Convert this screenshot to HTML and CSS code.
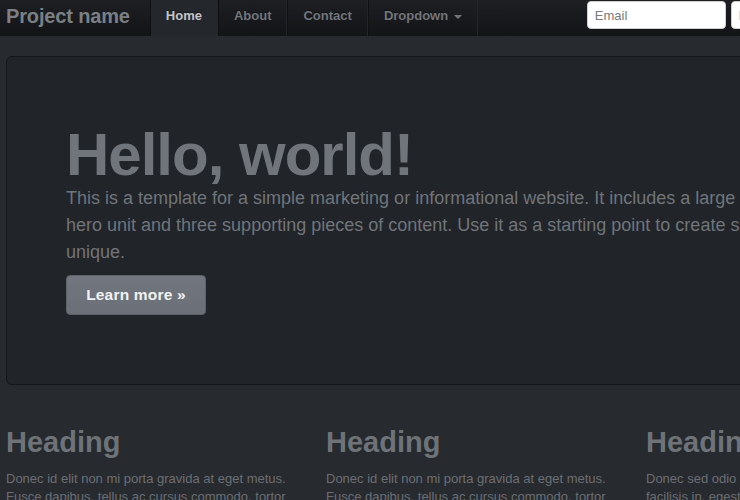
FILE: index.html
```html
<!DOCTYPE html>
<html lang="en">
<head>
<meta charset="utf-8">
<title>Project name</title>
<link rel="stylesheet" href="styles.css">
</head>
<body>
<div class="navbar">
  <div class="container nav-inner">
    <a class="brand" href="#">Project name</a>
    <ul class="nav">
      <li class="active"><a href="#">Home</a></li>
      <li><a href="#">About</a></li>
      <li><a href="#">Contact</a></li>
      <li><a href="#">Dropdown <span class="caret"></span></a></li>
    </ul>
    <form class="navbar-form">
      <input class="field" type="text" placeholder="Email">
      <input class="field" type="password" placeholder="Password">
      <button class="btn-sign" type="button">Sign in</button>
    </form>
  </div>
</div>

<div class="container">
  <div class="hero-unit">
    <h1>Hello, world!</h1>
    <p>This is a template for a simple marketing or informational website. It includes a large callout called the hero unit and three supporting pieces of content. Use it as a starting point to create something more unique.</p>
    <p><a class="btn-large" href="#">Learn more &raquo;</a></p>
  </div>

  <div class="row">
    <div class="span4">
      <h2>Heading</h2>
      <p>Donec id elit non mi porta gravida at eget metus. Fusce dapibus, tellus ac cursus commodo, tortor mauris condimentum nibh, ut fermentum massa justo sit amet risus.</p>
    </div>
    <div class="span4">
      <h2>Heading</h2>
      <p>Donec id elit non mi porta gravida at eget metus. Fusce dapibus, tellus ac cursus commodo, tortor mauris condimentum nibh, ut fermentum massa justo sit amet risus.</p>
    </div>
    <div class="span4">
      <h2>Heading</h2>
      <p>Donec sed odio dui. Cras justo odio, dapibus ac facilisis in, egestas eget quam. Vestibulum id ligula porta felis euismod semper.</p>
    </div>
  </div>
</div>
</body>
</html>
```

FILE: styles.css
```css
html, body {
  margin: 0;
  padding: 0;
  overflow: hidden;
  height: 100%;
}

body {
  background: #272a2f;
  font-family: "Liberation Sans", Arial, sans-serif;
  font-size: 13px;
  line-height: 18px;
  color: #6b6f74;
}

.container {
  width: 940px;
  margin-left: 6px;
}

.navbar {
  height: 36px;
  background: linear-gradient(#1d1f23, #121416);
  width: 100%;
  min-width: 960px;
}

.nav-inner {
  display: flex;
  align-items: flex-start;
  height: 36px;
}

.brand {
  display: block;
  font-size: 20px;
  font-weight: bold;
  line-height: 24px;
  padding-top: 4px;
  color: #7b8086;
  text-decoration: none;
  margin-right: 20px;
  letter-spacing: -0.15px;
}

.nav {
  display: flex;
  list-style: none;
  margin: 0;
  padding: 0;
  height: 36px;
}

.nav li {
  border-left: 1px solid #0f1012;
  border-right: 1px solid #22252a;
}

.nav a {
  display: block;
  padding: 7px 15px 11px;
  line-height: 18px;
  font-size: 13px;
  font-weight: bold;
  color: #72767c;
  text-decoration: none;
  text-shadow: 0 -1px 0 rgba(0, 0, 0, 0.4);
}

.nav li.active {
  background: #24272c;
}

.nav li.active a {
  color: #c3c6ca;
}

.caret {
  display: inline-block;
  width: 0;
  height: 0;
  margin-left: 2px;
  vertical-align: middle;
  border-top: 4px solid #72767c;
  border-left: 4px solid transparent;
  border-right: 4px solid transparent;
}

.navbar-form {
  display: flex;
  gap: 5px;
  margin: 1px 0 0 109px;
}

.field {
  box-sizing: border-box;
  width: 139px;
  height: 28px;
  padding: 0 7px;
  border: 1px solid #cfcfcf;
  border-radius: 4px;
  background: #fff;
  font-family: "Liberation Sans", Arial, sans-serif;
  font-size: 13px;
  color: #555;
}

.field::placeholder {
  color: #7a7a7a;
}

.btn-sign {
  height: 28px;
  padding: 0 12px;
  border: 1px solid #555;
  border-radius: 4px;
  background: #6b7078;
  color: #eee;
  font-family: "Liberation Sans", Arial, sans-serif;
  font-size: 13px;
}

.hero-unit {
  margin-top: 20px;
  margin-bottom: 30px;
  padding: 68px 60px 60px 59px;
  background: #212428;
  border: 1px solid #15171a;
  border-radius: 6px;
  color: #70757b;
}

.hero-unit h1 {
  margin: 0;
  font-size: 60px;
  line-height: 60px;
  letter-spacing: -1px;
  font-weight: bold;
  color: #6f757b;
}

.hero-unit p {
  margin: 0 0 9px;
  font-size: 18px;
  line-height: 27px;
}

.btn-large {
  display: inline-block;
  box-sizing: border-box;
  height: 40px;
  width: 140px;
  text-align: center;
  line-height: 38px;
  font-size: 15.5px;
  font-weight: bold;
  letter-spacing: 0.2px;
  color: #f2f2f2;
  text-decoration: none;
  background: linear-gradient(#72777f, #6b7078);
  border: 1px solid #5d6168;
  border-radius: 4px;
  vertical-align: top;
}

.row {
  display: flex;
  gap: 20px;
}

.span4 {
  width: 300px;
  flex: none;
}

.span4 h2 {
  margin: 9px 0 10px;
  font-size: 29px;
  line-height: 36px;
  font-weight: bold;
  color: #6e7378;
}

.span4 p {
  margin: 0 0 9px;
}
```
